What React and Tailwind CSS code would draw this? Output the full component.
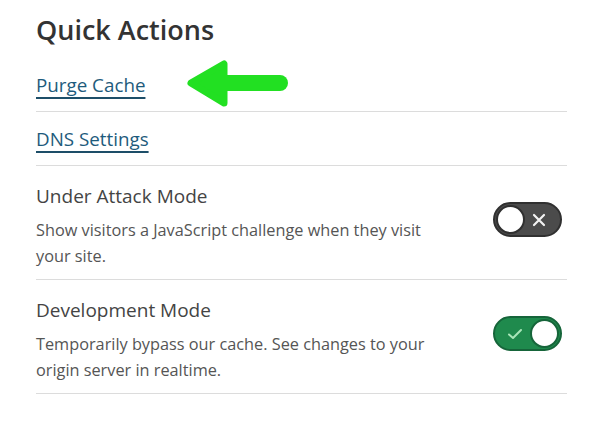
import React from 'react';

function Toggle({ on }) {
  if (on) {
    return (
      <div className="w-[69px] h-[35px] rounded-full bg-[#1f8a4d] border-2 border-[#16653a] flex items-center justify-between pl-[12px] pr-[1px] shrink-0">
        <svg width="16" height="14" viewBox="0 0 16 14" fill="none">
          <path d="M2 7.5 L6 11 L14 3" stroke="#a8e6b8" strokeWidth="2" strokeLinecap="round" strokeLinejoin="round" />
        </svg>
        <div className="w-[29px] h-[29px] rounded-full bg-white border-2 border-[#16653a]" />
      </div>
    );
  }
  return (
    <div className="w-[69px] h-[35px] rounded-full bg-[#4b4b4b] border-2 border-[#303030] flex items-center justify-between pl-[1px] pr-[14px] shrink-0">
      <div className="w-[29px] h-[29px] rounded-full bg-white border-2 border-[#303030]" />
      <svg width="14" height="14" viewBox="0 0 14 14" fill="none">
        <path d="M2 2 L12 12 M12 2 L2 12" stroke="#f2f2f2" strokeWidth="2.2" strokeLinecap="round" />
      </svg>
    </div>
  );
}

function LinkRow({ label }) {
  return (
    <div className="h-[54px] flex items-center border-b border-[#dcdcdc]">
      <a href="#" className="text-[18.8px] leading-[24px] text-[#1e5b7c] underline decoration-2 decoration-[#1d4e68] underline-offset-[5px]">
        {label}
      </a>
    </div>
  );
}

function ToggleRow({ title, desc, on }) {
  return (
    <div className="flex items-start justify-between border-b border-[#dcdcdc] pt-[17px] pb-[10px]">
      <div className="w-[405px]">
        <div className="text-[19px] leading-[26px] text-[#444]">{title}</div>
        <p className="mt-[8px] text-[16.3px] leading-[26px] text-[#555]">{desc}</p>
      </div>
      <div className="mt-[19px] mr-[5px]">
        <Toggle on={on} />
      </div>
    </div>
  );
}

export default function App() {
  return (
    <div className="w-[600px] h-[434px] bg-white relative" style={{ fontFamily: '"Open Sans", "Noto Sans", sans-serif' }}>
      <div className="pl-[36px] pr-[33px] pt-[11px]">
        <h2 className="text-[27px] leading-[38px] font-semibold text-[#333] mb-[9px]">Quick Actions</h2>
        <LinkRow label="Purge Cache" />
        <LinkRow label="DNS Settings" />
        <ToggleRow
          title="Under Attack Mode"
          desc="Show visitors a JavaScript challenge when they visit your site."
          on={false}
        />
        <ToggleRow
          title="Development Mode"
          desc="Temporarily bypass our cache. See changes to your origin server in realtime."
          on={true}
        />
      </div>

      {/* annotation arrow */}
      <svg className="absolute left-[180px] top-[55px]" width="120" height="60" viewBox="0 0 120 60" fill="none">
        <path d="M100 28 L40 28" stroke="#22e022" strokeWidth="16" strokeLinecap="round" />
        <path d="M11 28 L44 9 L44 48 Z" fill="#22e022" stroke="#22e022" strokeWidth="7" strokeLinejoin="round" />
      </svg>
    </div>
  );
}
